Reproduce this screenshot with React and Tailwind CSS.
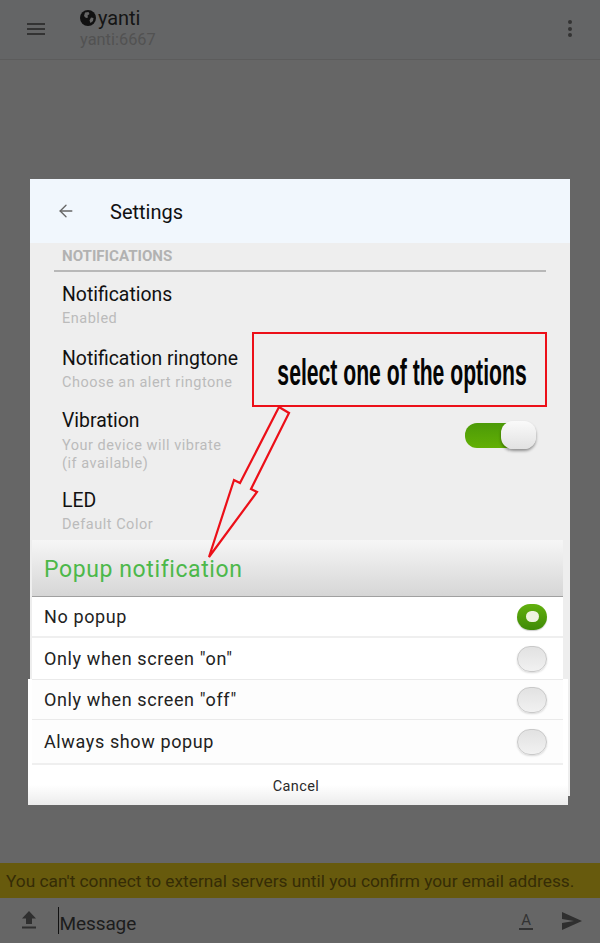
import { ArrowLeft } from 'lucide-react'

const font = { fontFamily: 'Roboto, sans-serif' }

function SettingRow({ title, sub, className = '' }) {
  return (
    <div className={className}>
      <p className="text-[19.4px] leading-[24px] text-[#111]">{title}</p>
      <div className="mt-[3px] text-[14.5px] leading-[18px] tracking-[0.52px] text-[#bbb]">{sub}</div>
    </div>
  )
}

function Radio({ on }) {
  if (on) {
    return (
      <div className="flex h-[26px] w-[30px] items-center justify-center rounded-full bg-gradient-to-b from-[#62b00e] to-[#3f8a06] shadow-[0_1px_1px_rgba(0,0,0,0.2)]">
        <div className="h-[11px] w-[13px] rounded-full bg-[#eef3df]" />
      </div>
    )
  }
  return (
    <div className="h-[26px] w-[30px] rounded-full border border-[#c9c9c9] bg-gradient-to-b from-[#e2e2e2] to-[#f1f1f1] shadow-[0_1px_2px_rgba(0,0,0,0.15)]" />
  )
}

function OptionRow({ label, on, className = '' }) {
  return (
    <div className={`flex items-center justify-between pl-[12px] pr-[16px] ${className}`}>
      <span className="text-[18px] tracking-[0.62px] text-[#222]">{label}</span>
      <Radio on={on} />
    </div>
  )
}

export default function App() {
  return (
    <div style={font} className="relative flex h-[943px] w-[600px] flex-col overflow-hidden bg-[#666666]">
      {/* top bar */}
      <div className="flex h-[60px] shrink-0 items-center border-b border-[#5c5c5c] bg-[#646566]">
        <svg width="18" height="12" viewBox="0 0 18 12" className="ml-[27px] mb-[2px] shrink-0">
          <path d="M0 1h18M0 6h18M0 11h18" stroke="#333" strokeWidth="2" />
        </svg>
        <div className="ml-[35px] flex-1 pb-[5px]">
          <div className="flex h-[26px] items-center">
            <svg width="16" height="16" viewBox="0 0 16 16" className="shrink-0">
              <circle cx="8" cy="8" r="8" fill="#111" />
              <path d="M5 2.5 8.5 2l1 2-2 1.5.5 2-2 .5L4 6Zm6 5 2.5.5-.5 3-2.5 2-1-2.5Z" fill="#666" />
            </svg>
            <span className="ml-[2px] text-[20px] leading-[26px] tracking-[-0.1px] text-[#151515]">yanti</span>
          </div>
          <p className="text-[16.4px] leading-[18px] text-[#525252]">yanti:6667</p>
        </div>
        <div className="mr-[28px] mb-[2px] flex flex-col gap-[2.5px]">
          <span className="h-[4px] w-[4px] rounded-full bg-[#333]" />
          <span className="h-[4px] w-[4px] rounded-full bg-[#333]" />
          <span className="h-[4px] w-[4px] rounded-full bg-[#333]" />
        </div>
      </div>

      {/* settings panel + popup */}
      <div className="flex-1 pt-[119px]">
        <div className="ml-[30px] h-[617px] w-[540px] bg-[#eeeeee]">
          <div className="flex h-[64px] items-center bg-[#f1f7fd]">
            <ArrowLeft className="ml-[26px] h-[20px] w-[20px] text-[#666]" strokeWidth={1.6} />
            <span className="ml-[34px] mt-[2px] text-[20px] text-[#111]">Settings</span>
          </div>

          <div className="h-[297px]">
            <div className="mx-[24px] border-b-2 border-[#b8b8b8] pb-[5px] pl-[8px] pt-[5px] text-[15.1px] font-bold leading-[17px] text-[#b2b2b2]">
              NOTIFICATIONS
            </div>
            <div className="pl-[32px]">
              <SettingRow title="Notifications" sub="Enabled" className="mt-[11px]" />
              <SettingRow title="Notification ringtone" sub="Choose an alert ringtone" className="mt-[19px]" />
              <SettingRow title="Vibration" sub={<span className="block pt-[1px]">Your device will vibrate<br />(if available)</span>} className="mt-[17px]" />
              <SettingRow title="LED" sub="Default Color" className="mt-[16px]" />
            </div>
          </div>

          <div className="ml-[2px] w-[531px]">
            <div className="flex h-[57px] items-center border-b border-[#a0a0a0] bg-gradient-to-b from-[#f6f6f6] via-[#e6e6e6] to-[#d6d6d6] pl-[12px] pt-[4px] text-[23px] tracking-[0.6px] text-[#4cb84a]">
              Popup notification
            </div>
            <OptionRow label="No popup" on className="h-[41px] border-b-2 border-[#efefef] bg-white" />
            <OptionRow label={'Only when screen "on"'} className="h-[41px] bg-white" />
          </div>
          <div className="-ml-[2px] w-[540px] bg-white pl-[4px] pr-[5px]">
            <div className="w-[531px]">
              <OptionRow label={'Only when screen "off"'} className="h-[41px] border-y border-[#eaeaea] bg-[#fdfdfd]" />
              <OptionRow label="Always show popup" className="h-[45px] border-b-2 border-[#efefef] bg-[#fdfdfd]" />
            </div>
            <div className="-ml-[4px] -mr-[5px] flex h-[40px] items-center justify-center bg-gradient-to-b from-white via-white to-[#ececec] pl-[4px] pr-[8px] pt-[4px] text-[14.5px] tracking-[0.4px] text-[#2a2a2a]">
              Cancel
            </div>
          </div>
        </div>
      </div>

      {/* banner + input */}
      <div className="flex h-[35px] shrink-0 items-center whitespace-nowrap bg-[#675a0d] pl-[6px] pt-[2px] text-[17.3px] text-[#352c06]">
        You can&apos;t connect to external servers until you confirm your email address.
      </div>
      <div className="flex h-[45px] shrink-0 items-center bg-[#666666]">
        <svg width="14" height="18" viewBox="0 0 14 18" className="ml-[22px] mt-[-2px] shrink-0">
          <path d="M7 0 14 7.5H10V13H4V7.5H0ZM0 15.5H14V17.5H0Z" fill="#2f2f2f" />
        </svg>
        <div className="ml-[22px] flex h-[27px] items-center border-l border-[#111] pl-[0.5px] pt-[6px] text-[19px] leading-[20px] tracking-[-0.1px] text-[#1c1c1c]">Message</div>
        <div className="ml-auto border-b-2 border-[#333] px-[2px] text-[15px] leading-[16px] text-[#333]">A</div>
        <svg width="20" height="18" viewBox="0 0 20 18" className="ml-[29px] mr-[18px] shrink-0">
          <path d="M0 0 20 9 0 18V11L12 9 0 7Z" fill="#2f2f2f" />
        </svg>
      </div>

      {/* toggle, sits over the settings row */}
      <div className="absolute left-[465px] top-[421px] h-[28px] w-[71px]">
        <div className="absolute left-0 top-[2px] h-[25px] w-[50px] rounded-l-[12px] bg-gradient-to-b from-[#4c9a08] to-[#62b004]" />
        <div className="absolute right-0 top-0 h-[28px] w-[35px] rounded-[12px] bg-gradient-to-b from-[#fafafa] to-[#e2e2e2] shadow-[0_2px_3px_rgba(0,0,0,0.4)]" />
      </div>

      {/* annotation */}
      <div className="absolute left-[252px] top-[332px] flex h-[75px] w-[295px] items-center justify-center border-[2.5px] border-[#ec0f18] bg-[#eeeeee]">
        <span
          style={{ fontFamily: '"Liberation Sans", sans-serif' }}
          className="ml-[6px] mt-[6px] scale-x-[0.588] whitespace-nowrap text-[36px] font-bold leading-none text-[#050505]"
        >
          select one of the options
        </span>
      </div>
      <svg className="absolute left-0 top-0" width="600" height="943" viewBox="0 0 600 943" fill="none">
        <path d="M279 407 289 413 251 489 257 492 209 557 234 480 240 483Z" fill="#eeeeee" stroke="#ec0f18" strokeWidth="2.2" />
      </svg>
    </div>
  )
}
